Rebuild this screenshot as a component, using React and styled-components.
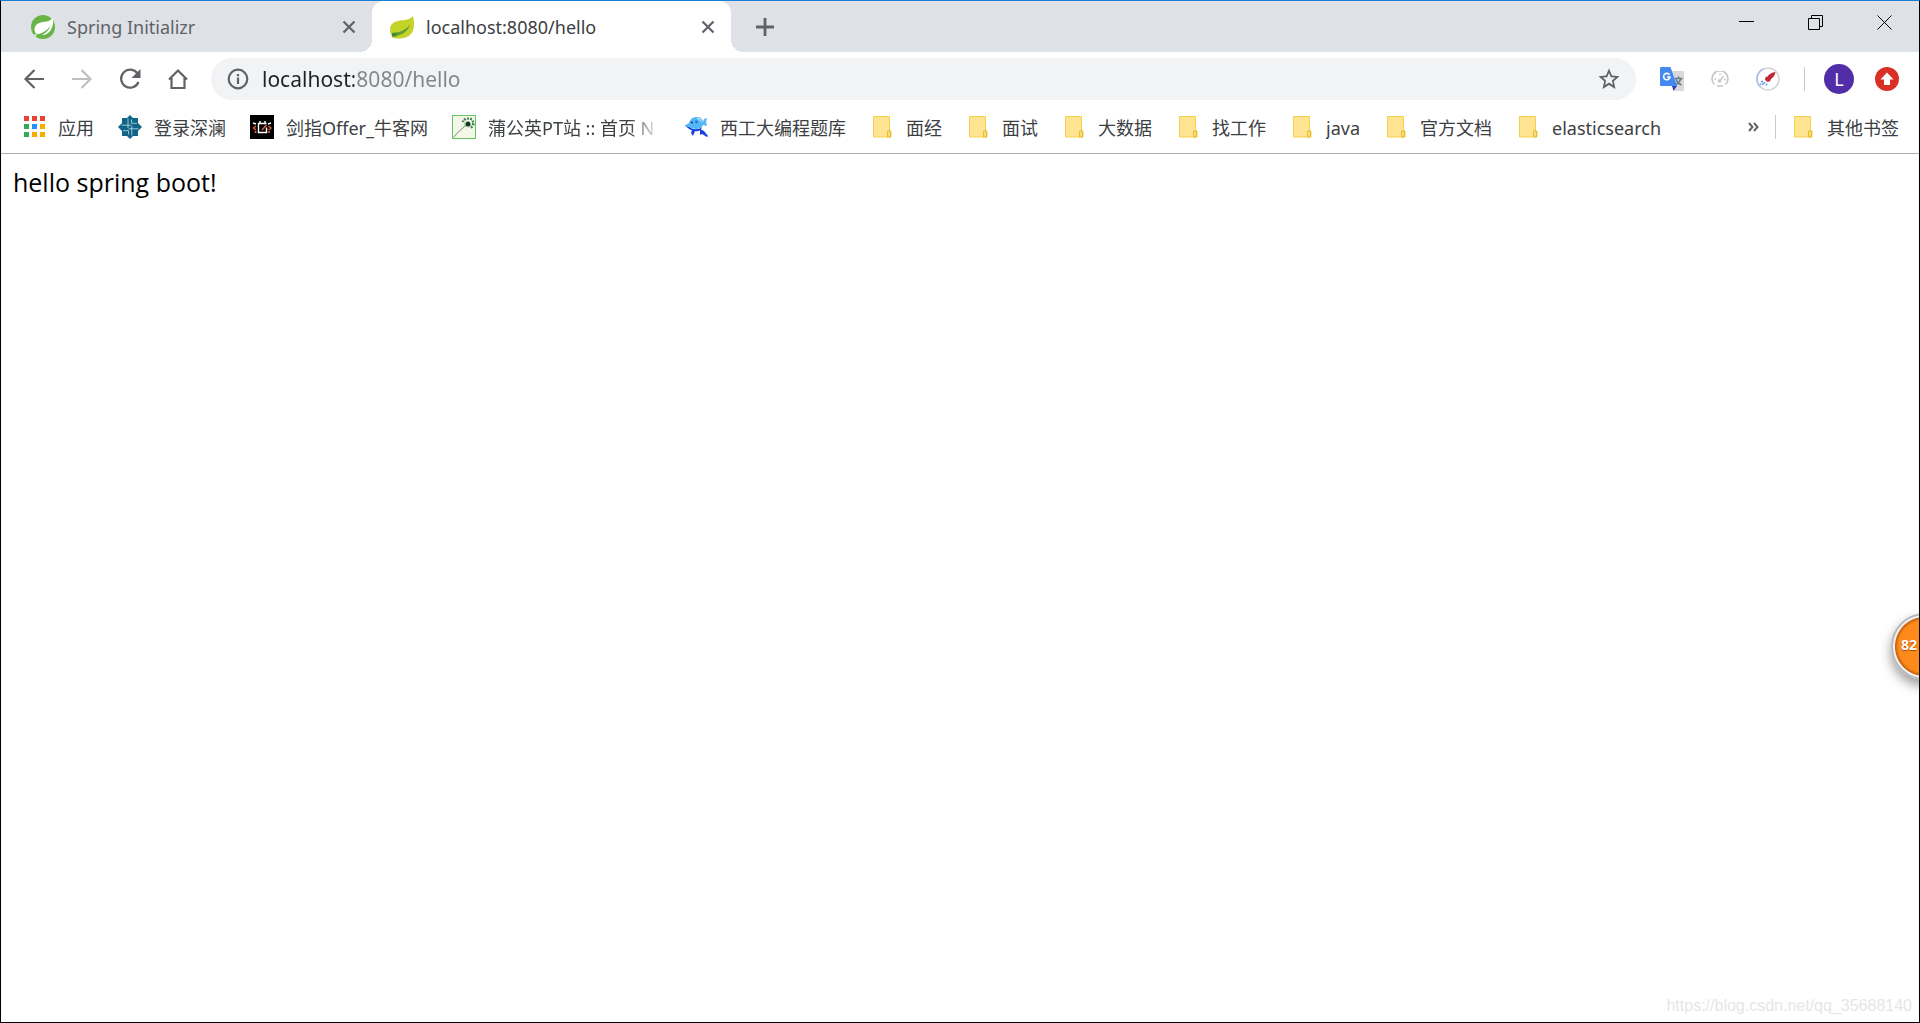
import React, { useState } from 'react';
import styled, { createGlobalStyle } from 'styled-components';

const GlobalStyle = createGlobalStyle`
  * {
    box-sizing: border-box;
  }
  body {
    margin: 0;
    background: #fff;
    font-family: 'Noto Sans', 'Noto Sans CJK SC', sans-serif;
  }
  button {
    padding: 0;
    border: 0;
    background: none;
    font-family: inherit;
  }
  svg {
    display: block;
    flex: none;
  }
`;

//--------------------------STYLING-------------------------//
const Window = styled.div`
  position: relative;
  display: flex;
  flex-direction: column;
  min-height: 100vh;
  border: 1px solid #000;
  border-top-color: #1a7fd4;
  overflow: hidden;
`;
const TabStrip = styled.header`
  display: flex;
  height: 51px;
  background: #dee1e6;
`;
const Tabs = styled.div`
  display: flex;
  flex: 1;
  min-width: 0;
  padding-left: 12px;
`;
const Tab = styled.div`
  position: relative;
  display: flex;
  align-items: center;
  gap: 12px;
  width: 359px;
  padding: 0 16px 0 18px;
  border-radius: 12px 12px 0 0;
  background: ${({ $active }) => ($active ? '#fff' : 'transparent')};
  color: ${({ $active }) => ($active ? '#3c4043' : '#5f6368')};
  /* flared feet of the open tab */
  &::before,
  &::after {
    content: '';
    display: ${({ $active }) => ($active ? 'block' : 'none')};
    position: absolute;
    bottom: 0;
    width: 12px;
    height: 12px;
  }
  &::before {
    left: -12px;
    background: radial-gradient(circle at 0 0, transparent 12px, #fff 12px);
  }
  &::after {
    right: -12px;
    background: radial-gradient(circle at 100% 0, transparent 12px, #fff 12px);
  }
`;
const TabTitle = styled.span`
  flex: 1;
  font-size: 18px;
  line-height: 24px;
  white-space: nowrap;
  overflow: hidden;
`;
const TabClose = styled.button`
  color: #5f6368;
`;
const NewTab = styled.button`
  display: flex;
  align-items: center;
  justify-content: center;
  width: 40px;
  margin-left: 14px;
  color: #5f6368;
`;
const WindowButton = styled.button`
  display: flex;
  align-items: center;
  justify-content: center;
  width: 69px;
  height: 43px;
`;
const Toolbar = styled.div`
  display: flex;
  align-items: center;
  padding: 6px 8px 6px 9px;
  height: 54px;
`;
const ToolButton = styled.button`
  display: flex;
  align-items: center;
  justify-content: center;
  width: 48px;
  height: 42px;
  color: ${({ $muted }) => ($muted ? '#bdbfc1' : '#5f6368')};
`;
const Omnibox = styled.label`
  display: flex;
  align-items: center;
  flex: 1;
  height: 42px;
  margin: 0 12px 0 9px;
  padding: 0 15px 0 16px;
  border-radius: 21px;
  background: #f1f3f4;
  color: #5f6368;
`;
/* host in dark text, the rest of the address in grey */
const Address = styled.input`
  flex: 1;
  min-width: 0;
  height: 30px;
  margin-left: 13px;
  padding: 0;
  border: 0;
  outline: none;
  font-family: inherit;
  font-size: 21px;
  background: linear-gradient(90deg, #202124 92px, #80868b 92px);
  -webkit-background-clip: text;
  background-clip: text;
  color: transparent;
  caret-color: #202124;
`;
const Divider = styled.span`
  width: 1px;
  height: 24px;
  margin: ${({ $margin }) => $margin};
  background: #c8cacd;
`;
const Avatar = styled.span`
  display: flex;
  align-items: center;
  justify-content: center;
  width: 30px;
  height: 30px;
  border-radius: 50%;
  background: #512da8;
  color: #fff;
  font-size: 18px;
`;
const BookmarkBar = styled.nav`
  display: flex;
  align-items: center;
  gap: 24px;
  height: 48px;
  padding: 0 20px 6px 21px;
  border-bottom: 1px solid #adadad;
`;
const Bookmark = styled.a`
  display: flex;
  align-items: center;
  gap: 12px;
  flex: none;
  color: #3c4043;
  font-size: 18px;
  line-height: 26px;
  text-decoration: none;
  white-space: nowrap;
`;
const BookmarkName = styled.span`
  width: ${({ $fade }) => ($fade ? '172px' : 'auto')};
  padding-top: 2px;
  overflow: hidden;
  mask-image: ${({ $fade }) =>
    $fade ? 'linear-gradient(90deg, #000 142px, transparent 172px)' : 'none'};
`;
const Spacer = styled.div`
  flex: 1;
`;
const More = styled.button`
  color: #5f6368;
`;
const OtherBookmarks = styled.div`
  display: flex;
  align-items: center;
`;
const Page = styled.main`
  flex: 1;
  padding: 12px;
  color: #000;
  font-family: 'Open Sans', sans-serif;
  font-size: 25px;
  line-height: 32px;
`;
const Watermark = styled.footer`
  padding: 0 7px 6px;
  color: #e6e6e6;
  font-family: 'Liberation Sans', sans-serif;
  font-size: 16px;
  line-height: 20px;
  text-align: right;
`;
const SpeedBall = styled.div`
  position: absolute;
  top: 612px;
  right: -39px;
  width: 67px;
  height: 67px;
  padding: 20px 0 0 8px;
  border: 2px solid #b9b9b9;
  border-radius: 50%;
  background: radial-gradient(circle, #ff8a1c 26px, #c9600e 29px, #f4f4f4 30px);
  box-shadow: 0 6px 12px rgba(0, 0, 0, 0.4);
  color: #fff;
  font-size: 14px;
  font-weight: bold;
  line-height: 20px;
  text-shadow: 0 1px 1px #a04a00;
`;

//----------------------------- ICONS --------------------------------//
const SpringIcon = () => (
  <svg width="24" height="24" viewBox="0 0 24 24">
    <circle cx="12" cy="12" r="12" fill="#68b545" />
    <path
      d="M21.6 2.5C20 5.5 17 6.5 12 7 6 7.800 3.500 11 3.500 14.500c0 2.200 1 3.700 2.200 4.700 3.300 1.500 9 1.400 12.500-2.200C22 13 22.800 7 21.600 2.500z"
      fill="#fff"
    />
    <path d="M4 19.500c6-.5 12-3 15.500-9-2 6.500-8 11-15 10.500z" fill="#68b545" />
    <circle cx="4.500" cy="20" r="1" fill="#fff" />
  </svg>
);
const LeafIcon = () => (
  <svg width="24" height="24" viewBox="0 0 24 24">
    <path
      d="M23 1c-3 4-8 4-13 4.500C3 6.500 0 10 0 14.500c0 3 1.200 5.500 2.200 8 5 1.500 13 1.500 17.300-2C25 16 24.500 7 23 1z"
      fill="#c3d327"
    />
    <path d="M2 18c7-.5 14-2.500 18.500-9-3 8-9 11.500-18 12.500z" fill="#5f9f2e" />
    <path d="M2 18l4-.3 1 3.500-5 .3z" fill="#3e8b3d" />
  </svg>
);
const CrossIcon = () => (
  <svg width="14" height="14" viewBox="0 0 14 14" stroke="currentColor" strokeWidth="2.200">
    <path d="M1.500 1.500l11 11M12.500 1.500l-11 11" />
  </svg>
);
const PlusIcon = () => (
  <svg width="18" height="18" viewBox="0 0 18 18" stroke="currentColor" strokeWidth="2.800">
    <path d="M9 0v18M0 9h18" />
  </svg>
);
const WindowIcon = ({ d }) => (
  <svg width="15" height="15" viewBox="0 0 15 15" fill="none" stroke="#000">
    <path d={d} />
  </svg>
);
const StrokeIcon = ({ children }) => (
  <svg width="22" height="22" viewBox="0 0 22 22" fill="none" stroke="currentColor" strokeWidth="2.200">
    {children}
  </svg>
);
const BackIcon = () => (
  <StrokeIcon>
    <path d="M21 11H2.500M11.500 2l-9 9 9 9" />
  </StrokeIcon>
);
const ForwardIcon = () => (
  <StrokeIcon>
    <path d="M1 11h18.500M10.500 2l9 9-9 9" />
  </StrokeIcon>
);
const ReloadIcon = () => (
  <StrokeIcon>
    <path d="M18.500 5.500A9 9 0 1 0 19.500 14" />
    <path d="M21.500 1v9h-9z" fill="currentColor" stroke="none" />
  </StrokeIcon>
);
const HomeIcon = () => (
  <StrokeIcon>
    <path d="M2 11.500L11 2.500l9 9M4.500 10v10h13V10" />
  </StrokeIcon>
);
const InfoIcon = () => (
  <StrokeIcon>
    <circle cx="11" cy="11" r="9.300" />
    <path d="M11 9.500v6.500M11 6v2.200" />
  </StrokeIcon>
);
const StarIcon = () => (
  <svg width="24" height="24" viewBox="0 0 24 24" fill="#5f6368">
    <path d="M22.500 9.300l-7.500-.7L12 1.500 9 8.600l-7.500.7 5.700 4.900L5.500 22 12 17.900l6.500 4.100-1.700-7.800 5.700-4.900zM12 15.600l-3.900 2.400 1-4.400-3.400-3 4.500-.4L12 6l1.800 4.200 4.500.4-3.400 3 1 4.400L12 15.600z" />
  </svg>
);
const TranslateIcon = () => (
  <svg width="24" height="24" viewBox="0 0 24 24">
    <path d="M9 4h14q1 0 1 1v18q0 1-1 1h-9z" fill="#d9d9d9" />
    <path d="M14.500 11.500h8M18.500 9.500v2M21 11.500c-1 3-3 5-5.500 6.500M16 12.500c1 2.500 3 4.500 5.500 5.500" fill="none" stroke="#607d8b" strokeWidth="1.500" />
    <path d="M12 19h5l-3.500 5z" fill="#3040b8" />
    <path d="M1 0h9.500L17 19H1q-1 0-1-1V1q0-1 1-1z" fill="#4688f1" />
    <path d="M9.500 7.800A3.200 3.200 0 1 0 10 10H7" fill="none" stroke="#fff" strokeWidth="1.600" />
  </svg>
);
const GaugeIcon = () => (
  <svg width="18" height="16" viewBox="0 0 18 16" fill="none" stroke="#c3c5c7" strokeWidth="1.600">
    <path d="M3.500 13.500A8 8 0 1 1 14.500 13.500M3.500 8H5M9 2.500V4M13 8.500h2M6 15h6" />
    <path d="M8.500 10.500L12.500 5" strokeWidth="1.500" />
    <circle cx="8.500" cy="10" r="1" />
  </svg>
);
const RocketIcon = () => (
  <svg width="24" height="24" viewBox="0 0 24 24">
    <circle cx="12" cy="12" r="11" fill="#fff" stroke="#d3d3d6" strokeWidth="1.500" />
    <path d="M7 2A11 11 0 0 0 4.500 20" fill="none" stroke="#adc1ea" strokeWidth="1.600" />
    <path d="M19.500 5c-4 .3-6 2-8 4.500l-2 .8-.5 2.500 2 2 3-.3.800-2.200c2.500-2 4.200-4 4.700-7.300z" fill="#bf2733" />
    <path d="M5 15l2-1M6 18l3-3M10 18.500l1-2M4 17l1 .5" stroke="#6d97e0" strokeWidth="1.600" />
  </svg>
);
const UpdateIcon = () => (
  <svg width="24" height="24" viewBox="0 0 24 24">
    <circle cx="12" cy="12" r="12" fill="#d93025" />
    <path d="M12 5.500l6.500 7h-3.500V18H9v-5.500H5.500z" fill="#fff" />
  </svg>
);
const MoreIcon = () => (
  <svg width="11" height="10" viewBox="0 0 11 10" fill="none" stroke="currentColor" strokeWidth="2">
    <path d="M1 1l3.500 4L1 9M6 1l3.500 4L6 9" />
  </svg>
);
const appColors = ['#ea4335', '#ea4335', '#ea4335', '#34a853', '#2492f5', '#fbab00', '#34a853', '#fbab00', '#fbab00'];
const AppsIcon = () => (
  <svg width="24" height="24" viewBox="0 0 24 24">
    {appColors.map((color, i) => (
      <rect key={i} x={2 + (i % 3) * 8} y={1 + Math.floor(i / 3) * 8} width="5" height="5" fill={color} />
    ))}
  </svg>
);
const SrunIcon = () => (
  <svg width="24" height="24" viewBox="0 0 24 24">
    <path d="M12 0l3 3h5v5l4 4-4 4v5h-5l-3 3-3-3H4v-5l-4-4 4-4V3h5z" fill="#0f6488" />
    <path d="M10 3.500V13M13.800 10.500v10M3.500 10.200H13M10.500 13.800h10M13.500 4.500v3.800H19M10.500 19.500v-3.800H5" fill="none" stroke="#c5dae4" strokeWidth=".8" />
  </svg>
);
const NowcoderIcon = () => (
  <svg width="24" height="24" viewBox="0 0 24 24" fill="none">
    <rect width="24" height="24" fill="#000" />
    <path d="M16.500 12.500V17.500H8.500V8.500h8M10 8V6M15 8V6M3 8l3 1M21 8l-3 1" stroke="#fff" strokeWidth="1.400" />
    <path d="M6 11l-2.500 2 2.500 2M4.500 16.500l2 1M18.500 11l2.500 2-2.500 2M20 16.500l-2 1M12 15l4.500-5" stroke="#e0613f" strokeWidth="1.400" />
  </svg>
);
const DandelionIcon = () => (
  <svg width="24" height="24" viewBox="0 0 24 24">
    <rect x=".5" y=".5" width="23" height="23" fill="#f3f7e8" stroke="#62c562" />
    <path d="M1.500 22.500C6 17 10 13 16 9" fill="none" stroke="#6e8b6e" />
    <circle cx="16" cy="9" r="2.500" fill="#083f20" />
    <circle cx="16.500" cy="8" r="4" fill="none" stroke="#7da384" strokeDasharray="1 1" />
    <path d="M10 6l2 .5M12 3.500l1.500 1.500M16 2.500v2M19.500 3l-1 2M22 6l-2 1M22.500 9.500l-2.500-.5M20.500 13l-1.500-1.500" stroke="#447a50" strokeWidth="1.800" />
  </svg>
);
const DolphinIcon = () => (
  <svg width="24" height="24" viewBox="0 0 24 24">
    <path d="M1 10l5 2c3 3 8 3 12 0-1 4-4 5-8 4-3-1-6-2-9-6zM8 15l3 1-2 5-2-3zM16 14l4 2 4 5-1 1-5-3-2 1z" fill="#1743dc" />
    <path d="M0 11l5-3c1-4 4-6 8-6 3.500 0 5.500 2 6 5l1-3 3-1-1 4 1 4-4-1c-1 3-4 4-7 4-5 0-7-3-12-3z" fill="#55b8f4" />
    <path d="M12 3c3-1 5 1 5.500 4-2-2-3.500-3-5.500-4z" fill="#b5e3ff" />
    <circle cx="8" cy="7.500" r="1.100" fill="#123896" />
    <circle cx="12.500" cy="7" r="1.400" fill="#2477d8" />
  </svg>
);
const FolderIcon = () => (
  <svg width="24" height="24" viewBox="0 0 24 24">
    <path d="M3.500 1.500h16V16h1.500v6H3.500z" fill="#ffe591" stroke="#f5d04c" />
    <path d="M17.500 22v-5q0-1.500 1.500-1.500t1.500 1.500v5z" fill="#fbdc72" stroke="#e5bd35" />
  </svg>
);

//----------------------------- DATA --------------------------------//
const bookmarks = [
  { name: '应用', icon: AppsIcon },
  { name: '登录深澜', icon: SrunIcon },
  { name: '剑指Offer_牛客网', icon: NowcoderIcon },
  { name: '蒲公英PT站 :: 首页 N', icon: DandelionIcon, fade: true },
  { name: '西工大编程题库', icon: DolphinIcon },
  { name: '面经', icon: FolderIcon },
  { name: '面试', icon: FolderIcon },
  { name: '大数据', icon: FolderIcon },
  { name: '找工作', icon: FolderIcon },
  { name: 'java', icon: FolderIcon },
  { name: '官方文档', icon: FolderIcon },
  { name: 'elasticsearch', icon: FolderIcon },
];

const App = () => {
  const [address, setAddress] = useState('localhost:8080/hello');

  return (
    <Window>
      <GlobalStyle />
      <TabStrip>
        <Tabs>
          <Tab>
            <SpringIcon />
            <TabTitle>Spring Initializr</TabTitle>
            <TabClose aria-label="Close">
              <CrossIcon />
            </TabClose>
          </Tab>
          <Tab $active>
            <LeafIcon />
            <TabTitle>localhost:8080/hello</TabTitle>
            <TabClose aria-label="Close">
              <CrossIcon />
            </TabClose>
          </Tab>
          <NewTab aria-label="New tab">
            <PlusIcon />
          </NewTab>
        </Tabs>
        <WindowButton aria-label="Minimize">
          <WindowIcon d="M0 6.500h15" />
        </WindowButton>
        <WindowButton aria-label="Restore">
          <WindowIcon d="M.5 3.500h11v11H.500zM3.500 3.500v-3h11v11h-3" />
        </WindowButton>
        <WindowButton aria-label="Close window">
          <WindowIcon d="M.5.5l14 14M14.500.5l-14 14" />
        </WindowButton>
      </TabStrip>

      <Toolbar>
        <ToolButton aria-label="Back">
          <BackIcon />
        </ToolButton>
        <ToolButton $muted aria-label="Forward">
          <ForwardIcon />
        </ToolButton>
        <ToolButton aria-label="Reload">
          <ReloadIcon />
        </ToolButton>
        <ToolButton aria-label="Home">
          <HomeIcon />
        </ToolButton>
        <Omnibox>
          <InfoIcon />
          <Address
            type="text"
            aria-label="Address"
            value={address}
            onChange={evt => setAddress(evt.target.value)}
          />
          <StarIcon />
        </Omnibox>
        <ToolButton aria-label="Translate">
          <TranslateIcon />
        </ToolButton>
        <ToolButton aria-label="Speed">
          <GaugeIcon />
        </ToolButton>
        <ToolButton aria-label="Rocket">
          <RocketIcon />
        </ToolButton>
        <Divider $margin="0 10px 0 12px" />
        <ToolButton>
          <Avatar>L</Avatar>
        </ToolButton>
        <ToolButton aria-label="Update">
          <UpdateIcon />
        </ToolButton>
      </Toolbar>

      <BookmarkBar>
        {bookmarks.map(({ name, icon: Icon, fade }) => (
          <Bookmark href="#" key={name}>
            <Icon />
            <BookmarkName $fade={fade}>{name}</BookmarkName>
          </Bookmark>
        ))}
        <Spacer />
        <OtherBookmarks>
          <More aria-label="More bookmarks">
            <MoreIcon />
          </More>
          <Divider $margin="0 15px 0 16px" />
          <Bookmark href="#">
            <FolderIcon />
            <BookmarkName>其他书签</BookmarkName>
          </Bookmark>
        </OtherBookmarks>
      </BookmarkBar>

      <Page>hello spring boot!</Page>
      <Watermark>https://blog.csdn.net/qq_35688140</Watermark>
      <SpeedBall>82</SpeedBall>
    </Window>
  );
};

export default App;
